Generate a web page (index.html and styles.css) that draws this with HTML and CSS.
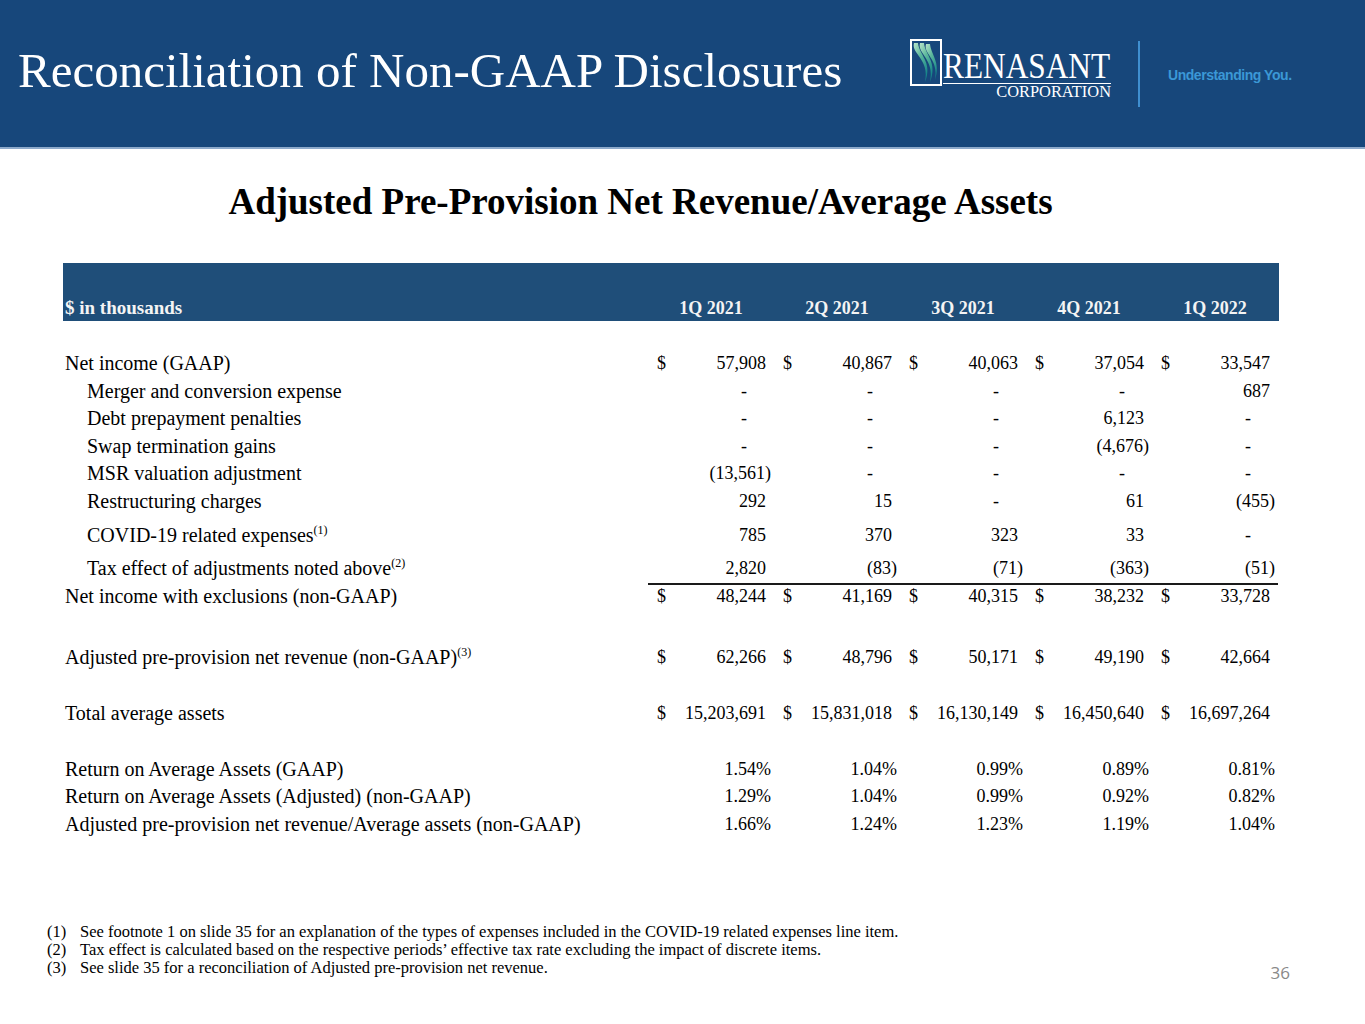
FILE: index.html
```html
<!DOCTYPE html>
<html lang="en">
<head>
<meta charset="utf-8">
<title>Reconciliation of Non-GAAP Disclosures</title>
<link rel="stylesheet" href="styles.css">
</head>
<body>
<header class="band">
  <h1 class="title">Reconciliation of Non-GAAP Disclosures</h1>
  <div class="logo">
    <svg class="mark" width="32" height="47" viewBox="0 0 32 47" aria-hidden="true">
      <defs>
        <linearGradient id="sw" x1="0" y1="0" x2="0.5" y2="1">
          <stop offset="0" stop-color="#b8e4c9"/>
          <stop offset="0.45" stop-color="#5cb89c"/>
          <stop offset="1" stop-color="#17878a"/>
        </linearGradient>
      </defs>
      <rect x="1" y="1" width="30" height="45" fill="none" stroke="#fff" stroke-width="2"/>
      <path d="M4 4 C1 15, 20 20, 15 43 C23 23, 9 16, 8 4 Z" fill="url(#sw)"/>
      <path d="M10 4 C7 15, 25 20, 20 43 C28 23, 15 16, 14 4 Z" fill="url(#sw)"/>
      <path d="M16 5 C13 15, 29 20, 25 41 C31 23, 21 16, 20 5 Z" fill="url(#sw)"/>
    </svg>
    <div class="wordmark">
      <span class="lg-name"><span class="lg-name-in">RENASANT</span></span>
      <span class="lg-corp">CORPORATION</span>
    </div>
    <span class="divider"></span>
    <span class="lg-tag">Understanding You.</span>
  </div>
</header>

<h2 class="subtitle">Adjusted Pre-Provision Net Revenue/Average Assets</h2>

<div class="table">
  <div class="row thead">
    <div class="lab">$ in thousands</div>
    <div class="hc">1Q 2021</div>
    <div class="hc">2Q 2021</div>
    <div class="hc">3Q 2021</div>
    <div class="hc">4Q 2021</div>
    <div class="hc">1Q 2022</div>
  </div>

  <div class="row first">
    <div class="lab">Net income (GAAP)</div>
    <div class="v"><span class="cur">$</span><span>57,908</span></div>
    <div class="v"><span class="cur">$</span><span>40,867</span></div>
    <div class="v"><span class="cur">$</span><span>40,063</span></div>
    <div class="v"><span class="cur">$</span><span>37,054</span></div>
    <div class="v"><span class="cur">$</span><span>33,547</span></div>
  </div>
  <div class="row">
    <div class="lab ind">Merger and conversion expense</div>
    <div class="v d">-</div><div class="v d">-</div><div class="v d">-</div><div class="v d">-</div>
    <div class="v"><span>687</span></div>
  </div>
  <div class="row">
    <div class="lab ind">Debt prepayment penalties</div>
    <div class="v d">-</div><div class="v d">-</div><div class="v d">-</div>
    <div class="v"><span>6,123</span></div>
    <div class="v d">-</div>
  </div>
  <div class="row">
    <div class="lab ind">Swap termination gains</div>
    <div class="v d">-</div><div class="v d">-</div><div class="v d">-</div>
    <div class="v"><span class="n">(4,676)</span></div>
    <div class="v d">-</div>
  </div>
  <div class="row">
    <div class="lab ind">MSR valuation adjustment</div>
    <div class="v"><span class="n">(13,561)</span></div>
    <div class="v d">-</div><div class="v d">-</div><div class="v d">-</div><div class="v d">-</div>
  </div>
  <div class="row">
    <div class="lab ind">Restructuring charges</div>
    <div class="v"><span>292</span></div>
    <div class="v"><span>15</span></div>
    <div class="v d">-</div>
    <div class="v"><span>61</span></div>
    <div class="v"><span class="n">(455)</span></div>
  </div>
  <div class="row tall">
    <div class="lab ind">COVID-19 related expenses<sup class="sup">(1)</sup></div>
    <div class="v"><span>785</span></div>
    <div class="v"><span>370</span></div>
    <div class="v"><span>323</span></div>
    <div class="v"><span>33</span></div>
    <div class="v d">-</div>
  </div>
  <div class="row tall">
    <div class="lab ind">Tax effect of adjustments noted above<sup class="sup">(2)</sup></div>
    <div class="v"><span>2,820</span></div>
    <div class="v"><span class="n">(83)</span></div>
    <div class="v"><span class="n">(71)</span></div>
    <div class="v"><span class="n">(363)</span></div>
    <div class="v"><span class="n">(51)</span></div>
  </div>
  <div class="row total">
    <div class="lab">Net income with exclusions (non-GAAP)</div>
    <div class="v"><span class="cur">$</span><span>48,244</span></div>
    <div class="v"><span class="cur">$</span><span>41,169</span></div>
    <div class="v"><span class="cur">$</span><span>40,315</span></div>
    <div class="v"><span class="cur">$</span><span>38,232</span></div>
    <div class="v"><span class="cur">$</span><span>33,728</span></div>
  </div>

  <div class="row mt34">
    <div class="lab">Adjusted pre-provision net revenue (non-GAAP)<sup class="sup">(3)</sup></div>
    <div class="v"><span class="cur">$</span><span>62,266</span></div>
    <div class="v"><span class="cur">$</span><span>48,796</span></div>
    <div class="v"><span class="cur">$</span><span>50,171</span></div>
    <div class="v"><span class="cur">$</span><span>49,190</span></div>
    <div class="v"><span class="cur">$</span><span>42,664</span></div>
  </div>

  <div class="row mt28">
    <div class="lab">Total average assets</div>
    <div class="v"><span class="cur">$</span><span>15,203,691</span></div>
    <div class="v"><span class="cur">$</span><span>15,831,018</span></div>
    <div class="v"><span class="cur">$</span><span>16,130,149</span></div>
    <div class="v"><span class="cur">$</span><span>16,450,640</span></div>
    <div class="v"><span class="cur">$</span><span>16,697,264</span></div>
  </div>

  <div class="row mt28">
    <div class="lab">Return on Average Assets (GAAP)</div>
    <div class="v"><span class="n">1.54%</span></div>
    <div class="v"><span class="n">1.04%</span></div>
    <div class="v"><span class="n">0.99%</span></div>
    <div class="v"><span class="n">0.89%</span></div>
    <div class="v"><span class="n">0.81%</span></div>
  </div>
  <div class="row">
    <div class="lab">Return on Average Assets (Adjusted) (non-GAAP)</div>
    <div class="v"><span class="n">1.29%</span></div>
    <div class="v"><span class="n">1.04%</span></div>
    <div class="v"><span class="n">0.99%</span></div>
    <div class="v"><span class="n">0.92%</span></div>
    <div class="v"><span class="n">0.82%</span></div>
  </div>
  <div class="row">
    <div class="lab">Adjusted pre-provision net revenue/Average assets (non-GAAP)</div>
    <div class="v"><span class="n">1.66%</span></div>
    <div class="v"><span class="n">1.24%</span></div>
    <div class="v"><span class="n">1.23%</span></div>
    <div class="v"><span class="n">1.19%</span></div>
    <div class="v"><span class="n">1.04%</span></div>
  </div>
</div>

<footer class="foot">
  <ol class="notes">
    <li><span class="num">(1)</span><span>See footnote 1 on slide 35 for an explanation of the types of expenses included in the COVID-19 related expenses line item.</span></li>
    <li><span class="num">(2)</span><span>Tax effect is calculated based on the respective periods’ effective tax rate excluding the impact of discrete items.</span></li>
    <li><span class="num">(3)</span><span>See slide 35 for a reconciliation of Adjusted pre-provision net revenue.</span></li>
  </ol>
  <div class="page">36</div>
</footer>
</body>
</html>
```
FILE: styles.css
```css
* { box-sizing: border-box; }

body {
  margin: 0;
  width: 1365px;
  height: 1024px;
  overflow: hidden;
  background: #fff;
  color: #000;
  font-family: "Liberation Serif", "Times New Roman", serif;
}

/* header band */
.band {
  height: 149px;
  background: #17477b;
  border-bottom: 2px solid #8eaacb;
  display: flex;
  align-items: flex-start;
  padding-left: 18px;
}
.title {
  margin: 46px 0 0;
  font-weight: normal;
  font-size: 49px;
  line-height: 49px;
  color: #fff;
  white-space: nowrap;
}

/* logo */
.logo {
  display: flex;
  align-items: flex-start;
  margin: 39px 67px 0 auto;
  color: #fff;
}
.mark { display: block; flex: none; }
.wordmark {
  width: 168px;
  margin: 12px 0 0 1px;
  display: flex;
  flex-direction: column;
}
.lg-name {
  display: block;
  height: 33px;
  line-height: 32px;
  border-bottom: 1.5px solid #fff;
  white-space: nowrap;
}
.lg-name-in {
  display: inline-block;
  font-size: 35px;
  transform: scaleX(0.895);
  transform-origin: left center;
}
.lg-corp {
  display: block;
  text-align: right;
  font-size: 16.4px;
  line-height: 14px;
  margin-top: 1px;
  white-space: nowrap;
}
.divider {
  flex: none;
  width: 2px;
  height: 66px;
  margin: 2px 0 0 27px;
  background: #3f8fd0;
}
.lg-tag {
  width: 130px;
  margin: 26px 0 0 28px;
  font-family: "Liberation Sans", Arial, sans-serif;
  font-weight: bold;
  font-size: 14px;
  line-height: 20px;
  letter-spacing: -0.45px;
  color: #3b98d6;
  white-space: nowrap;
}

/* subtitle */
.subtitle {
  margin: 35px 0 0;
  width: 1281px;
  text-align: center;
  font-size: 37px;
  line-height: 36px;
  font-weight: bold;
}

/* table */
.table {
  margin: 43px 0 0 63px;
  width: 1216px;
}
.row {
  display: grid;
  grid-template-columns: 585px repeat(5, 126px);
  height: 27.6px;
  line-height: 27.6px;
  font-size: 20px;
  white-space: nowrap;
}
.thead {
  height: 58px;
  background: #1f4e79;
  color: #f4f4f4;
  font-weight: bold;
  font-size: 18px;
  line-height: 20px;
  align-items: end;
  padding-bottom: 3px;
}
.thead .lab { font-size: 19px; }
.hc { text-align: center; }

.first { margin-top: 29px; }
.tall { height: 33.6px; padding-top: 6px; }
.mt34 { margin-top: 34px; }
.mt28 { margin-top: 28px; }

.lab { padding-left: 2px; }
.lab.ind { padding-left: 24px; }

.v {
  display: flex;
  justify-content: flex-end;
  padding: 0 8px 0 9px;
  font-size: 18px;
}
.v .cur { margin-right: auto; }
.v.d { padding-right: 27px; }
.n { margin-right: -5px; }

.total .v { box-shadow: inset 0 2px 0 #1a1a1a; }

.sup {
  font-size: 12px;
  line-height: 0;
  vertical-align: 8px;
}

/* footer */
.foot {
  display: flex;
  align-items: flex-start;
  margin-top: 85px;
  padding: 0 75px 0 47px;
}
.notes {
  list-style: none;
  margin: 0;
  padding: 0;
  font-size: 16.5px;
  line-height: 18px;
}
.notes li {
  display: grid;
  grid-template-columns: 33px auto;
  white-space: nowrap;
}
.page {
  margin-left: auto;
  padding-top: 40px;
  font-family: "Open Sans", "Liberation Sans", sans-serif;
  font-size: 17px;
  line-height: 20px;
  color: #898989;
}
```
